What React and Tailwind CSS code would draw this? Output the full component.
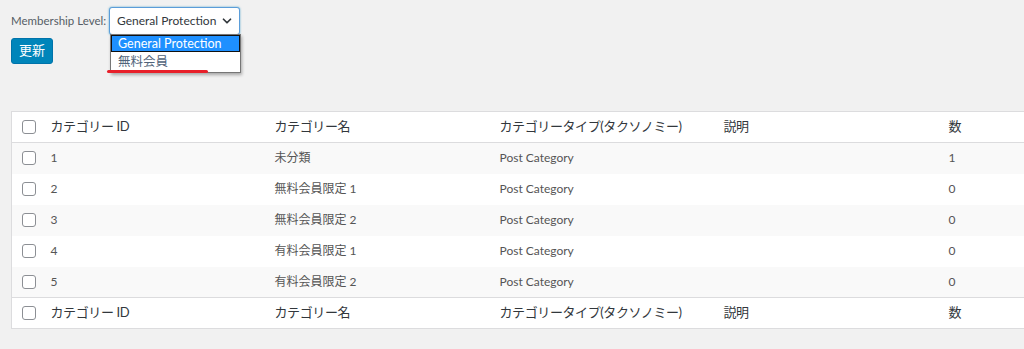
import { ChevronDown } from "lucide-react";

const rows = [
  { id: 1, name: "未分類", count: 1 },
  { id: 2, name: "無料会員限定 1", count: 0 },
  { id: 3, name: "無料会員限定 2", count: 0 },
  { id: 4, name: "有料会員限定 1", count: 0 },
  { id: 5, name: "有料会員限定 2", count: 0 },
];

const font = {
  fontFamily: 'Lato, "Noto Sans CJK JP", sans-serif',
};

const Checkbox = () => (
  <span className="block w-[14px] h-[14px] rounded-[3px] border border-[#8c8f94] bg-white" />
);

const headCell = "pl-[10px] text-[13px] tracking-[-0.4px] text-[#32373c]";
const bodyCell = "pl-[10px] text-[12px] text-[#555]";

const HeadRow = ({ top }) => (
  <tr className={top ? "border-b border-[#dcdcde]" : "border-t border-[#dcdcde]"}>
    <td className="h-[31px] w-[29px] pl-[10px]">
      <Checkbox />
    </td>
    <td className={headCell}>カテゴリー ID</td>
    <td className={headCell}>カテゴリー名</td>
    <td className={headCell}>カテゴリータイプ(タクソノミー)</td>
    <td className={headCell}>説明</td>
    <td className={headCell}>数</td>
  </tr>
);

export default function App() {
  return (
    <div
      className="w-[1024px] h-[349px] overflow-hidden bg-[#f1f1f1] relative"
      style={font}
    >
      {/* Membership selector */}
      <div className="pl-[11px] pt-[7px]">
        <div className="flex items-center">
          <span className="w-[98px] text-[11.5px] text-[#555d66] whitespace-nowrap">
            Membership Level:
          </span>
          <div className="w-[131px] h-[28px] flex items-center justify-between pl-[7px] pr-[5px] bg-white border border-[#5b9dd9] rounded-[3px] shadow-[0_0_2px_rgba(30,140,190,0.8)]">
            <span className="text-[12px] text-[#32373c] whitespace-nowrap">General Protection</span>
            <ChevronDown className="w-[14px] h-[14px] text-[#32373c]" strokeWidth={3} />
          </div>
        </div>
        <button className="mt-[3px] h-[26px] w-[42px] bg-[#0085ba] border border-[#0073aa] rounded-[3px] text-white text-[13px]">
          更新
        </button>
      </div>

      {/* Open dropdown list */}
      <div className="absolute left-[110px] top-[34px] w-[131px] bg-white border border-[#767676] shadow-[1px_2px_3px_rgba(0,0,0,0.3)] text-[12.5px] whitespace-nowrap">
        <div className="h-[17px] leading-[15px] pl-[6px] bg-[#1e90ff] text-white border border-[#111]">
          General Protection
        </div>
        <div className="h-[20px] leading-[19px] pl-[7px] text-[#50637a]">無料会員</div>
      </div>
      <div className="absolute left-[107px] top-[70px] w-[101px] h-[3px] rounded-full bg-[#e8202a]" />

      {/* Category table */}
      <div className="mt-[47px] ml-[11px]">
        <table className="w-[1152px] table-fixed bg-white border border-[#dcdcde] border-collapse">
          <colgroup>
            <col className="w-[29px]" />
            <col className="w-[224px]" />
            <col className="w-[225px]" />
            <col className="w-[224px]" />
            <col className="w-[225px]" />
            <col className="w-[225px]" />
          </colgroup>
          <thead>
            <HeadRow top />
          </thead>
          <tbody>
            {rows.map((row, i) => (
              <tr key={row.id} className={i % 2 === 0 ? "bg-[#f9f9f9]" : "bg-white"}>
                <td className="h-[31px] pl-[10px]">
                  <Checkbox />
                </td>
                <td className={bodyCell}>{row.id}</td>
                <td className={bodyCell}>{row.name}</td>
                <td className={bodyCell}>Post Category</td>
                <td className={bodyCell}></td>
                <td className={bodyCell}>{row.count}</td>
              </tr>
            ))}
          </tbody>
          <tfoot>
            <HeadRow />
          </tfoot>
        </table>
      </div>
    </div>
  );
}
